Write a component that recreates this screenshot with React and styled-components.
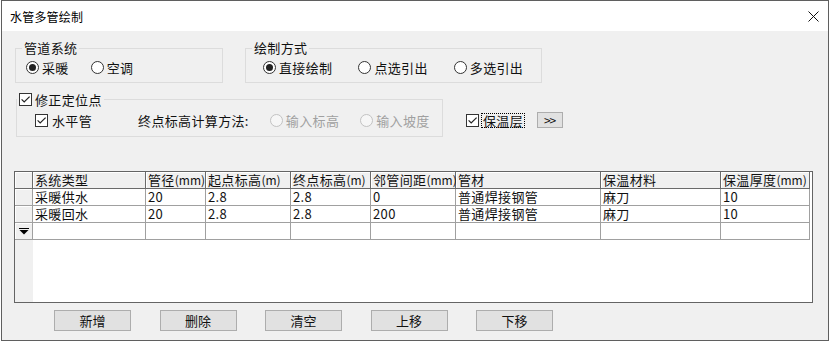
import React from "react";
import styled, { createGlobalStyle } from "styled-components";

const GlobalStyle = createGlobalStyle`
  html, body { margin: 0; padding: 0; background: #fff; }
  body {
    font-family: "Noto Sans CJK SC", "Noto Sans", sans-serif;
    font-size: 13px;
    color: #000;
  }
`;

const Page = styled.div`
  width: 831px;
  height: 343px;
  overflow: hidden;
  padding-left: 1px;
  box-sizing: border-box;
`;

const Dialog = styled.div`
  width: 828px;
  height: 341px;
  box-sizing: border-box;
  border: 1px solid #5f5f5f;
  background: #f0f0f0;
  display: flex;
  flex-direction: column;
`;

const TitleBar = styled.div`
  height: 30px;
  background: #fff;
  display: flex;
  align-items: center;
  padding-left: 8px;
  font-size: 12px;
  letter-spacing: 0.2px;
`;

const TitleText = styled.div`
  flex: 1;
`;

const CloseBtn = styled.div`
  width: 30px;
  height: 30px;
  display: flex;
  align-items: center;
  justify-content: center;
`;

const Body = styled.div`
  flex: 1;
  display: flex;
  flex-direction: column;
  padding: 10px 0 0 12px;
  letter-spacing: 0.35px;
  color: #111;
`;

const Row = styled.div`
  display: flex;
  align-items: ${p => p.$align || "flex-start"};
  margin-top: ${p => p.$mt || 0}px;
`;

const Group = styled.fieldset`
  margin: 0 0 0 ${p => p.$ml}px;
  padding: 0;
  width: ${p => p.$w}px;
  height: ${p => p.$h}px;
  box-sizing: border-box;
  border: 1px solid #dcdcdc;
  min-inline-size: 0;
`;

const Legend = styled.legend`
  margin-left: ${p => p.$ml}px;
  padding: 0 ${p => p.$pad}px;
  height: 14px;
  line-height: 14px;
`;

const LegendInner = styled.span`
  display: inline-flex;
  align-items: center;
  gap: 3px;
  height: 14px;
`;

const Options = styled.div`
  display: flex;
  align-items: center;
  gap: ${p => p.$gap}px;
  margin: ${p => p.$mt}px 0 0 ${p => p.$ml}px;
  height: 13px;
`;

const Option = styled.label`
  display: inline-flex;
  align-items: center;
  gap: ${p => p.$gap || 3}px;
  height: 13px;
  line-height: 13px;
  white-space: nowrap;
  color: ${p => (p.$disabled ? "#a0a0a0" : "inherit")};
`;

const RadioCircle = styled.span`
  width: 13px;
  height: 13px;
  box-sizing: border-box;
  border-radius: 50%;
  border: 1px solid ${p => (p.$disabled ? "#c2c2c2" : "#333")};
  background: ${p => (p.$disabled ? "#f6f6f6" : "#fff")};
  display: inline-flex;
  align-items: center;
  justify-content: center;
  flex: none;
`;

const RadioDot = styled.span`
  width: 7px;
  height: 7px;
  border-radius: 50%;
  background: #222;
`;

const CheckSquare = styled.span`
  width: 13px;
  height: 13px;
  box-sizing: border-box;
  border: 1px solid #333;
  background: #fff;
  display: inline-flex;
  align-items: center;
  justify-content: center;
  flex: none;
`;

const Caption = styled.span`
  white-space: nowrap;
  line-height: 13px;
  margin-left: ${p => p.$ml || 0}px;
`;

const SideCluster = styled.div`
  display: flex;
  align-items: center;
  height: 16px;
  margin: 0 0 9px 23px;
`;

const FocusLabel = styled.span`
  margin-left: 2px;
  border: 1px dotted #000;
  padding: 0 1px;
  line-height: 13px;
  white-space: nowrap;
`;

const SmallButton = styled.div`
  margin-left: 12px;
  width: 26px;
  height: 16px;
  box-sizing: border-box;
  background: #e1e1e1;
  border: 1px solid #adadad;
  font-size: 12px;
  line-height: 13px;
  text-align: center;
  letter-spacing: -1px;
  padding-right: 1px;
`;

const Grid = styled.div`
  margin-top: 34px;
  width: 799px;
  height: 132px;
  box-sizing: border-box;
  border: 1px solid #646464;
  background: linear-gradient(to right, #f0f0f0 18px, #fff 18px);
  display: grid;
  grid-template-columns: 18px 113px 60px 85px 80px 85px 145px 120px 89px;
  grid-auto-rows: 17px;
  align-content: start;
`;

const Cell = styled.div`
  box-sizing: border-box;
  height: 17px;
  padding-left: 2px;
  line-height: 16px;
  white-space: nowrap;
  border-right: 1px solid #a0a0a0;
  border-bottom: 1px solid #a0a0a0;
  background: #fff;
`;

const HeadCell = styled(Cell)`
  background: #f0f0f0;
  border-right-color: #6a6a6a;
  border-bottom-color: #6a6a6a;
  box-shadow: inset 1px 1px 0 #fff;
`;

const Unit = styled.span`
  font-size: 12px;
  letter-spacing: 0;
`;

const RowHead = styled(Cell)`
  padding: 0;
  background: #f0f0f0;
  box-shadow: inset 1px 1px 0 #fff;
  display: flex;
  align-items: center;
  justify-content: center;
`;

const ButtonBar = styled.div`
  display: flex;
  gap: 28.5px;
  margin-top: 7px;
  padding-left: 40px;
`;

const Button = styled.div`
  width: 77px;
  height: 21px;
  box-sizing: border-box;
  background: #e1e1e1;
  border: 1px solid #adadad;
  text-align: center;
  line-height: 19px;
  letter-spacing: 0;
`;

const Radio = ({ checked, disabled, children }) => (
  <Option $disabled={disabled}>
    <RadioCircle $disabled={disabled}>{checked && <RadioDot />}</RadioCircle>
    {children}
  </Option>
);

const Check = () => (
  <CheckSquare>
    <svg width="11" height="11" viewBox="0 0 11 11">
      <path d="M1.6 5.4 L4.2 8 L9.6 2.6" fill="none" stroke="#222" strokeWidth="1.2" />
    </svg>
  </CheckSquare>
);

const columns = [
  ["系统类型"],
  ["管径", "mm"],
  ["起点标高", "m"],
  ["终点标高", "m"],
  ["邻管间距", "mm"],
  ["管材"],
  ["保温材料"],
  ["保温厚度", "mm"],
];

const rows = [
  ["采暖供水", "20", "2.8", "2.8", "0", "普通焊接钢管", "麻刀", "10"],
  ["采暖回水", "20", "2.8", "2.8", "200", "普通焊接钢管", "麻刀", "10"],
  ["", "", "", "", "", "", "", ""],
];

const buttons = ["新增", "删除", "清空", "上移", "下移"];

export default function App() {
  return (
    <Page>
      <GlobalStyle />
      <Dialog>
        <TitleBar>
          <TitleText>水管多管绘制</TitleText>
          <CloseBtn>
            <svg width="11" height="11" viewBox="0 0 11 11">
              <path d="M0.5 0.5 L10.5 10.5 M10.5 0.5 L0.5 10.5" stroke="#111" strokeWidth="1" />
            </svg>
          </CloseBtn>
        </TitleBar>
        <Body>
          <Row>
            <Group $ml={1} $w={208} $h={42}>
              <Legend $ml={6} $pad={2}>管道系统</Legend>
              <Options $gap={22} $mt={6} $ml={10}>
                <Radio checked>采暖</Radio>
                <Radio>空调</Radio>
              </Options>
            </Group>
            <Group $ml={22} $w={297} $h={42}>
              <Legend $ml={6} $pad={2}>绘制方式</Legend>
              <Options $gap={26} $mt={6} $ml={17}>
                <Radio checked>直接绘制</Radio>
                <Radio>点选引出</Radio>
                <Radio>多选引出</Radio>
              </Options>
            </Group>
          </Row>
          <Row $mt={9} $align="flex-end">
            <Group $ml={2} $w={427} $h={45}>
              <Legend $ml={0} $pad={2}>
                <LegendInner>
                  <Check />
                  <Caption>修正定位点</Caption>
                </LegendInner>
              </Legend>
              <Options $gap={21} $mt={8} $ml={18}>
                <Option $gap={4}>
                  <Check />
                  水平管
                </Option>
                <Caption $ml={25}>终点标高计算方法:</Caption>
                <Radio disabled>输入标高</Radio>
                <Radio disabled>输入坡度</Radio>
              </Options>
            </Group>
            <SideCluster>
              <Check />
              <FocusLabel>保温层</FocusLabel>
              <SmallButton>&gt;&gt;</SmallButton>
            </SideCluster>
          </Row>
          <Grid>
            <HeadCell />
            {columns.map(([name, unit]) => (
              <HeadCell key={name}>
                {name}
                {unit && <Unit>({unit})</Unit>}
              </HeadCell>
            ))}
            {rows.map((r, i) => (
              <React.Fragment key={i}>
                <RowHead>
                  {i === rows.length - 1 && (
                    <svg width="10" height="7" viewBox="0 0 10 7">
                      <rect x="0" y="0" width="10" height="1" fill="#000" />
                      <polygon points="0.5,2 9.5,2 5,6.5" fill="#000" />
                    </svg>
                  )}
                </RowHead>
                {r.map((v, j) => (
                  <Cell key={j}>{v}</Cell>
                ))}
              </React.Fragment>
            ))}
          </Grid>
          <ButtonBar>
            {buttons.map(b => (
              <Button key={b}>{b}</Button>
            ))}
          </ButtonBar>
        </Body>
      </Dialog>
    </Page>
  );
}
